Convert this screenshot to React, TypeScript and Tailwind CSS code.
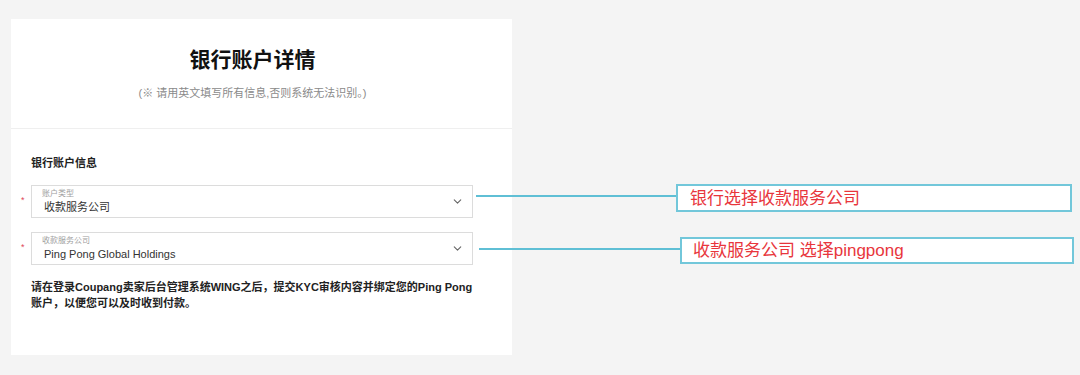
import { ChevronDown } from 'lucide-react';

const FONT = "font-['Liberation_Sans','Noto_Sans_CJK_SC',sans-serif]";

type SelectProps = {
  label: string;
  value: string;
};

function SelectField({ label, value }: SelectProps) {
  return (
    <div className="relative">
      <span className="absolute left-[-10px] top-[11px] text-[9px] leading-none text-[#e0455a]">*</span>
      <div className="flex h-[33px] items-center justify-between border border-[#dcdcdc] bg-white pl-[10px] pr-[8px]">
        <div className="flex flex-col">
          <span className="text-[8px] leading-[9px] text-[#a0a0a0]">{label}</span>
          <span className="mt-[2px] pl-[2px] text-[11px] leading-[14px] text-[#333]">{value}</span>
        </div>
        <ChevronDown className="h-[13px] w-[13px] text-[#666]" strokeWidth={2} />
      </div>
    </div>
  );
}

export default function App() {
  return (
    <div className={`relative h-[375px] w-[1080px] overflow-hidden bg-[#f4f4f4] ${FONT}`}>
      <div className="ml-[11px] pt-[19px]">
        <div className="h-[336px] w-[501px] bg-white">
          {/* header */}
          <div className="flex flex-col items-center border-b border-[#efefef] pt-[27px] pr-[18px] pb-[27px]">
            <h1 className="text-[21px] font-bold leading-[28px] text-[#111]">银行账户详情</h1>
            <p className="mt-[11px] text-[11px] leading-[16px] text-[#8a8a8a]">(※ 请用英文填写所有信息,否则系统无法识别。)</p>
          </div>

          {/* body */}
          <div className="px-[20px] pt-[26px]">
            <h2 className="text-[11px] font-bold leading-[16px] text-[#222]">银行账户信息</h2>
            <div className="mt-[14px] flex w-[442px] flex-col gap-[14px]">
              <SelectField label="账户类型" value="收款服务公司" />
              <SelectField label="收款服务公司" value="Ping Pong Global Holdings" />
            </div>
            <p className="mt-[14px] text-[11px] font-bold leading-[16px] text-[#222]">
              请在登录Coupang卖家后台管理系统WING之后，提交KYC审核内容并绑定您的Ping Pong
              <br />
              账户，以便您可以及时收到付款。
            </p>
          </div>
        </div>
      </div>

      {/* annotations */}
      <div className="absolute left-[476px] top-[195px] h-[2px] w-[201px] bg-[#5fbfd5]" />
      <div className="absolute left-[676px] top-[184px] flex h-[28px] w-[396px] items-center border-2 border-[#72c7da] bg-white pl-[12px]">
        <span className="text-[17px] leading-none text-[#e8363c]">银行选择收款服务公司</span>
      </div>

      <div className="absolute left-[479px] top-[248px] h-[2px] w-[202px] bg-[#5fbfd5]" />
      <div className="absolute left-[680px] top-[237px] flex h-[27px] w-[394px] items-center border-2 border-[#72c7da] bg-white pl-[11px]">
        <span className="text-[17px] leading-none text-[#e8363c]">收款服务公司 选择pingpong</span>
      </div>
    </div>
  );
}
